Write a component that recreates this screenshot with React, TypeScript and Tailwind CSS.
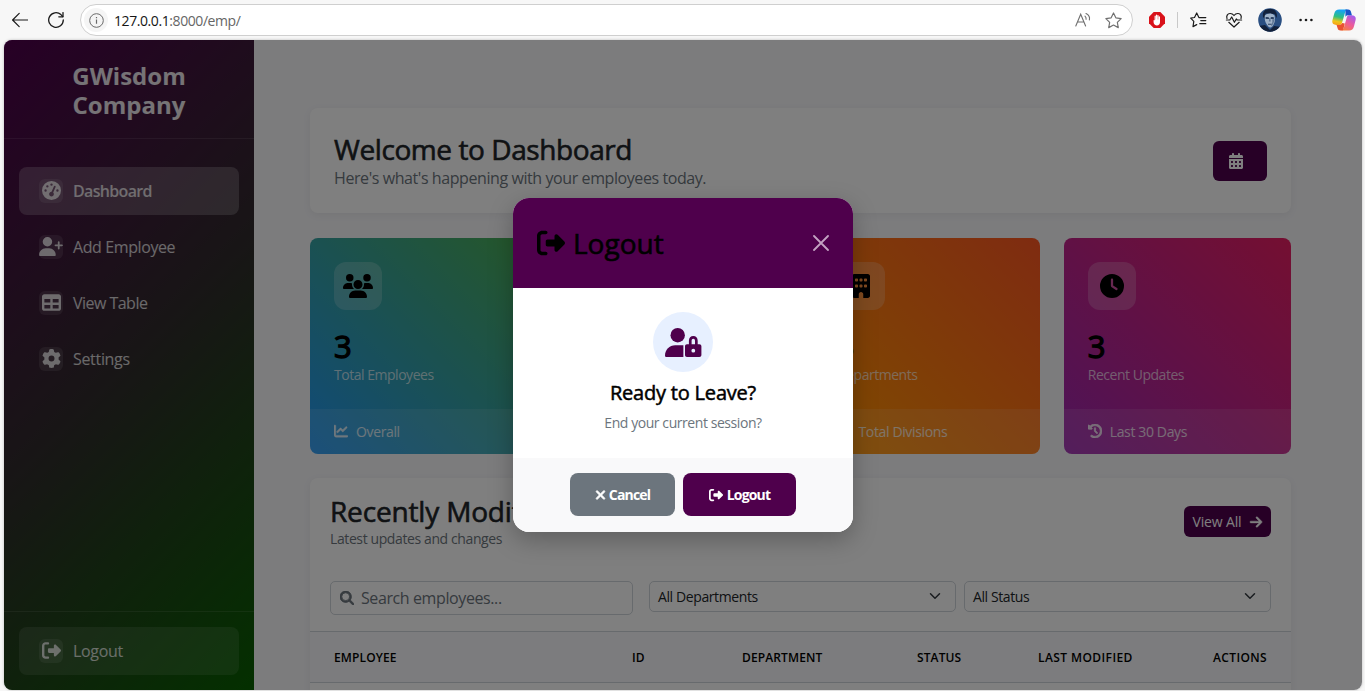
import type { ReactNode } from "react";
import {
  FaArrowRight,
  FaBuilding,
  FaCalendarDays,
  FaChartLine,
  FaClock,
  FaClockRotateLeft,
  FaGaugeHigh,
  FaGear,
  FaLayerGroup,
  FaMagnifyingGlass,
  FaRightFromBracket,
  FaTable,
  FaUserCheck,
  FaUserPlus,
  FaUsers,
  FaXmark,
} from "react-icons/fa6";

function BrowserBar() {
  return (
    <header className="flex h-10 shrink-0 items-center bg-[#f7f7f7] text-[#1b1b1b]">
      <svg className="ml-3 h-4 w-4 shrink-0" viewBox="0 0 16 16" fill="none" stroke="currentColor" strokeWidth="1.2" strokeLinecap="round" strokeLinejoin="round">
        <path d="M15.5 8H.8M7.2 1.4.6 8l6.600 6.600" />
      </svg>
      <svg className="ml-5 h-4 w-4 shrink-0" viewBox="0 0 16 16" fill="none" stroke="currentColor" strokeWidth="1.3" strokeLinecap="round" strokeLinejoin="round">
        <path d="M15.300 8A7.300 7.300 0 1 1 12.900 2.600L14.800 4.600" />
        <path d="M15 .6v4.200h-4.200" />
      </svg>
      <div className="ml-4 flex h-8 w-[1053px] shrink-0 items-center rounded-full border border-[#cfcfcf] bg-white pl-[3px]">
        <span className="flex h-6 w-6 items-center justify-center rounded-full bg-[#f5f5f5]">
          <svg className="h-[15px] w-[15px]" viewBox="0 0 15 15" fill="none" stroke="#6a6a6a" strokeWidth="1">
            <circle cx="7.500" cy="7.500" r="6.800" />
            <path d="M7.500 6.600v4.200M7.500 4v1.200" strokeWidth="1.200" />
          </svg>
        </span>
        <span className="ml-1.5 text-[14px] tracking-[-0.03em] text-[#666]">
          <span className="text-[#161616]">127.0.0.1</span>:8000/emp/
        </span>
        <svg className="ml-auto h-4 w-4" viewBox="0 0 16 16" fill="none" stroke="#707070" strokeWidth="1.100" strokeLinecap="round">
          <path d="M.8 14 5.700 2.200 10.600 14M2.600 10h6.200" />
          <path d="M10 4.200c.9.9 1.300 1.900 1.100 3.100M11 1.600c3 1.500 4 3.700 3.400 6.300" />
        </svg>
        <svg className="mr-2.5 ml-3.5 h-[17px] w-[17px]" viewBox="0 0 16 16" fill="none" stroke="#707070" strokeWidth="1.100" strokeLinejoin="round">
          <path d="m8 .9 2.200 4.600 5 .7-3.600 3.500.9 5L8 12.300l-4.500 2.400.9-5L.8 6.200l5-.7z" />
        </svg>
      </div>
      <svg className="ml-4 h-4 w-4 shrink-0" viewBox="0 0 16 16">
        <path d="M4.700 0h6.600L16 4.700v6.600L11.300 16H4.700L0 11.300V4.700z" fill="#d9121a" />
        <path d="M4.500 8.500c.1-.7 1-.7 1.100 0V4.200c0-.9 1.200-.9 1.200 0v3.200h.2V3.200c0-.9 1.200-.9 1.200 0v4.200h.2V3.700c0-.9 1.200-.9 1.200 0v3.900h.2V5c0-.9 1.200-.9 1.200 0v5.200c0 1.900-1.200 3.200-3.100 3.200-1.700 0-2.700-.8-3.200-2.300z" fill="#fff" />
      </svg>
      <span className="ml-3 h-4 w-px shrink-0 bg-[#c9c9c9]" />
      <svg className="ml-3 h-4 w-[17px] shrink-0" viewBox="0 0 17 16" fill="none" stroke="currentColor" strokeWidth="1.200" strokeLinejoin="round" strokeLinecap="round">
        <path d="M15.800 5.600H8.900L6.700 1 4.500 5.500.7 6.100l3.100 3.300-.8 5.200 3.700-2M10.800 8.600h5M9.800 11.700h6" />
      </svg>
      <svg className="ml-[18px] h-4 w-[18px] shrink-0" viewBox="0 0 17 16" fill="none" stroke="currentColor" strokeWidth="1.200" strokeLinejoin="round" strokeLinecap="round">
        <path d="M1.500 6.500C.6 4 2 1.600 4.500 1.500 6.200 1.400 7.600 2.300 8.500 3.500c.9-1.200 2.300-2.100 4-2C15 1.600 16.400 4 15.500 6.500" />
        <path d="M.9 8h3.400l1.900-3 2.700 5.300 1.900-3.300.9 1h4.400M3.300 10.300l5.200 4.700 5.200-4.700" />
      </svg>
      <svg className="ml-[15px] h-6 w-6 shrink-0" viewBox="0 0 24 24">
        <defs>
          <clipPath id="avatar"><circle cx="12" cy="12" r="11.800" /></clipPath>
        </defs>
        <g clipPath="url(#avatar)">
          <path fill="#2a4f82" d="M0 0h24v24H0z" />
          <path fill="#12213b" d="M5 9C4 3 8 .5 12.500 1c5 0 7.500 4 6 9l-2-4-9-.5-1 5zM0 18l7-1 5 5 4-4 8 1v5H0z" />
          <path fill="#9fb2c8" d="M6.800 7.500c2-2.500 7.500-3 9.800 0 .7 4.500.2 7.500-1.600 10-1.500 2.500-4 2.500-5.500 0-2-2.500-3.200-5.500-2.700-10z" />
          <path fill="#2c4162" d="M7.400 9.400c1.300-.7 2.500-.6 3.600 0v1.500c-1.300.3-2.500.2-3.400-.2zM12.600 9.400c1.300-.7 2.500-.6 3.600 0l-.3 1.400c-1 .4-2.200.4-3.300.1zM10 15.800h3.800v.9H10z" />
          <path fill="#5f7796" d="M14 11.500c1 2-.2 5-1.400 7.200 2-.6 3.400-3.600 3.900-7.700zM11.300 10h1l.5 3.600h-2z" />
        </g>
      </svg>
      <svg className="ml-4 h-4 w-4 shrink-0" viewBox="0 0 16 16" fill="currentColor">
        <circle cx="2.600" cy="8" r="1.300" /><circle cx="8" cy="8" r="1.300" /><circle cx="13.400" cy="8" r="1.300" />
      </svg>
      <svg className="ml-[18px] h-[22px] w-6 shrink-0" viewBox="0 0 24 22">
        <defs>
          <linearGradient id="cpa" x1="0.3" y1="0" x2="0.1" y2="1">
            <stop offset="0" stopColor="#15a4f4" /><stop offset="0.450" stopColor="#2fc07f" /><stop offset="0.750" stopColor="#f0c419" /><stop offset="1" stopColor="#f59a1b" />
          </linearGradient>
          <linearGradient id="cpb" x1="0.8" y1="0" x2="0.2" y2="1">
            <stop offset="0" stopColor="#a25cf0" /><stop offset="0.500" stopColor="#ec5b9c" /><stop offset="1" stopColor="#f7803c" />
          </linearGradient>
        </defs>
        <path d="M16.800 6.300h2.700c3.300 0 4.800 1.900 4.100 4.700l-1.600 6.200c-.8 3-2.200 4.300-4.900 4.300H8.700c2 0 2.700-1.200 3.300-3.200l2.600-9.300c.4-1.500 1-2.700 2.200-2.700z" fill="url(#cpb)" />
        <path d="M7.200.5h9c-1.800 0-2.600 1.200-3.200 3.200l-2.800 9.500c-.4 1.500-1 2.700-2.700 2.700H4.300C1 15.900-.3 14 .5 11l1.700-6.200C3 1.800 4.500.5 7.200.5z" fill="url(#cpa)" />
        <path d="M13.500.5h2.700c1.500 0 2.300.8 2.700 2.100l1 3.700h-4.200c-1 0-1.900.7-2.300 1.900z" fill="#1856c9" />
        <path d="M10.500 21.500H8.400c-1.500 0-2.400-.8-2.800-2.200l-1-3.400h3.200c1.200 0 2-.8 2.400-1.900l2.600.5-1.200 4.700c-.2 1-.6 1.900-1.100 2.300z" fill="#e9522f" />
      </svg>
    </header>
  );
}

type NavItemProps = { icon: ReactNode; label: string; tone?: string };

function NavItem({ icon, label, tone = "" }: NavItemProps) {
  return (
    <a className={`flex h-12 items-center rounded-lg px-5 text-[16px] text-white/80 ${tone}`}>
      <span className="mr-2.5 flex h-6 w-6 items-center justify-center rounded-md bg-white/10 pb-[2px] text-white/80">{icon}</span>
      {label}
    </a>
  );
}

function Sidebar() {
  return (
    <aside className="flex w-[250px] shrink-0 flex-col bg-[linear-gradient(135deg,#4f004c_0%,#302c2c_50%,#086000_100%)]">
      <div className="flex h-[99px] items-center justify-center border-b border-white/10 pt-px text-center text-[24px] leading-[29px] font-bold text-white/90">
        <span>GWisdom<br />Company</span>
      </div>
      <nav className="flex flex-col gap-2 px-[15px] pt-7">
        <NavItem icon={<FaGaugeHigh className="h-[19px] w-[19px]" />} label="Dashboard" tone="bg-white/20 font-semibold tracking-[-0.042em]" />
        <NavItem icon={<FaUserPlus className="h-[19px] w-6" />} label="Add Employee" tone="tracking-[-0.025em]" />
        <NavItem icon={<FaTable className="h-[19px] w-[19px]" />} label="View Table" tone="tracking-[-0.033em]" />
        <NavItem icon={<FaGear className="h-[19px] w-[19px]" />} label="Settings" tone="tracking-[-0.02em]" />
      </nav>
      <div className="mt-auto h-[79px] border-t border-white/10 px-[15px] pt-[15px]">
        <NavItem icon={<FaRightFromBracket className="h-[19px] w-[19px]" />} label="Logout" tone="bg-white/10 tracking-[-0.02em]" />
      </div>
    </aside>
  );
}

type StatProps = { icon: ReactNode; value: string; label: string; footIcon: ReactNode; foot: string; tone: string };

function StatCard({ icon, value, label, footIcon, foot, tone }: StatProps) {
  return (
    <section className={`flex h-[216px] flex-1 flex-col overflow-hidden rounded-lg ${tone}`}>
      <div className="flex-1 px-6 pt-6">
        <div className="flex h-12 w-12 items-center justify-center rounded-xl bg-white/20 text-black">{icon}</div>
        <div className="mt-[18px] text-[31px] leading-9 font-normal text-black [-webkit-text-stroke:1.3px_black]">{value}</div>
        <div className="text-[14px] leading-[21px] tracking-[-0.034em] text-white/70">{label}</div>
      </div>
      <div className="flex h-[45px] items-center bg-white/10 px-6 text-[14px] tracking-[-0.026em] text-white/80">
        <span className="mr-2 pb-0.5">{footIcon}</span>
        {foot}
      </div>
    </section>
  );
}

function SelectBox({ label }: { label: string }) {
  return (
    <div className="flex h-[31px] w-[307px] items-center justify-between rounded-[5px] border border-[#ced4da] pr-3.5 pl-2 text-[14px] tracking-[-0.028em] text-[#212529]">
      {label}
      <svg className="mb-0.5 h-3 w-3" viewBox="0 0 16 16" fill="none" stroke="#343a40" strokeWidth="2" strokeLinecap="round" strokeLinejoin="round">
        <path d="m2 5 6 6 6-6" />
      </svg>
    </div>
  );
}

function RecentTable() {
  return (
    <section className="mt-6 h-[240px] overflow-hidden rounded-t-lg bg-white shadow-[0_2px_8px_rgba(0,0,0,0.06)]">
      <div className="flex items-start justify-between px-5 pt-4">
        <div>
          <h2 className="text-[28px] leading-[34px] tracking-[-0.006em] text-[#212529] [-webkit-text-stroke:0.6px_#212529]">Recently Modified</h2>
          <p className="mt-px text-[14px] leading-5 tracking-[-0.028em] text-[#6c757d]">Latest updates and changes</p>
        </div>
        <button className="mt-3 flex h-[31px] w-[87px] items-center justify-center gap-[7px] rounded-md bg-[#4f004c] text-[14px] tracking-[-0.01em] text-white">
          View All
          <FaArrowRight className="h-3.5 w-3.5 stroke-[16]" />
        </button>
      </div>
      <div className="mt-8 flex items-start px-5">
        <div className="mr-4 flex h-[34px] w-[303px] items-center rounded-[5px] border border-[#ced4da] pl-[9px] text-[16px] tracking-[-0.025em] text-[#6c757d]">
          <FaMagnifyingGlass className="mr-[7px] h-3.5 w-3.5 stroke-[32]" />
          Search employees...
        </div>
        <SelectBox label="All Departments" />
        <span className="w-2" />
        <SelectBox label="All Status" />
      </div>
      <div className="mt-4 flex h-[52px] items-center border-y border-[#ced4da] bg-[#f8f9fc] pt-0.5 pl-6 text-[12px] font-semibold tracking-[0.01em] text-black">
        <span className="w-[298px]">EMPLOYEE</span>
        <span className="w-[110px]">ID</span>
        <span className="w-[175px]">DEPARTMENT</span>
        <span className="w-[121px]">STATUS</span>
        <span className="w-[175px] tracking-[0.034em]">LAST MODIFIED</span>
        <span className="tracking-[0.03em]">ACTIONS</span>
      </div>
    </section>
  );
}

function Dashboard() {
  return (
    <main className="flex-1 bg-[#f8f8fb] pt-[68px] pr-[71px] pl-14">
      <section className="flex h-[105px] items-center justify-between rounded-lg bg-white px-6 shadow-[0_2px_8px_rgba(0,0,0,0.06)]">
        <div>
          <h1 className="text-[28px] leading-[34px] tracking-[-0.015em] text-[#212529] [-webkit-text-stroke:0.6px_#212529]">Welcome to Dashboard</h1>
          <p className="text-[16px] leading-6 tracking-[-0.026em] text-[#6c757d]">Here's what's happening with your employees today.</p>
        </div>
        <button className="flex h-10 w-[54px] items-center justify-center rounded-md bg-[#4f004c] pr-2 text-white">
          <FaCalendarDays className="h-4 w-4" />
        </button>
      </section>
      <div className="mt-[25px] flex gap-6">
        <StatCard
          icon={<FaUsers className="h-6 w-[30px]" />} value="3" label="Total Employees"
          footIcon={<FaChartLine className="h-3.5 w-3.5 stroke-[16]" />} foot="Overall"
          tone="bg-[linear-gradient(45deg,#2196f3,#4caf50)]"
        />
        <StatCard
          icon={<FaUserCheck className="h-6 w-[30px]" />} value="3" label="Active Employees"
          footIcon={<FaChartLine className="h-3.5 w-3.5" />} foot="Current"
          tone="bg-[linear-gradient(45deg,#4caf50,#8bc34a)]"
        />
        <StatCard
          icon={<FaBuilding className="h-6 w-6" />} value="3" label="Departments"
          footIcon={<FaLayerGroup className="h-3.5 w-3.5" />} foot="Total Divisions"
          tone="bg-[linear-gradient(45deg,#ff9800,#ff5722)]"
        />
        <StatCard
          icon={<FaClock className="h-6 w-6" />} value="3" label="Recent Updates"
          footIcon={<FaClockRotateLeft className="h-3.5 w-3.5 stroke-[24]" />} foot="Last 30 Days"
          tone="bg-[linear-gradient(45deg,#9c27b0,#e91e63)]"
        />
      </div>
      <RecentTable />
    </main>
  );
}

function UserLockIcon() {
  return (
    <svg className="mt-px h-[29px] w-[37px]" viewBox="0 0 37 29" fill="currentColor">
      <circle cx="12.700" cy="7.200" r="7.200" />
      <path d="M10.200 17.200h8.200V29H1.600C.6 29 0 28.400 0 27.400c0-5.700 4.500-10.200 10.200-10.200z" />
      <path fillRule="evenodd" d="M23.900 16.300v-3.600c0-2.600 1.800-4.700 4.400-4.700s4.400 2.100 4.400 4.700v3.600h1.700c1.200 0 2 .8 2 2V27c0 1.200-.8 2-2 2H22c-1.200 0-2-.8-2-2v-8.700c0-1.200.8-2 2-2zm2.700 0H30v-3.600c0-1.100-.6-1.900-1.700-1.900s-1.700.8-1.700 1.900zm1.700 4.500a1.900 1.900 0 1 0 0 3.800 1.900 1.900 0 0 0 0-3.800z" />
    </svg>
  );
}

function LogoutModal() {
  return (
    <div className="absolute inset-0 bg-black/50">
      <div className="mt-[158px] ml-[509px] flex h-[334px] w-[340px] flex-col overflow-hidden rounded-2xl bg-white shadow-[0_8px_24px_rgba(0,0,0,0.25)]">
        <div className="flex h-[90px] items-center justify-between bg-[#4f004c] px-6">
          <div className="flex items-center gap-2 text-[28px] text-black [-webkit-text-stroke:0.6px_black]">
            <FaRightFromBracket className="h-7 w-7" />
            Logout
          </div>
          <svg className="h-4 w-4" viewBox="0 0 16 16" fill="none" stroke="#c3a2c2" strokeWidth="1.800" strokeLinecap="round">
            <path d="m1 1 14 14M15 1 1 15" />
          </svg>
        </div>
        <div className="flex flex-1 flex-col items-center pt-6">
          <div className="flex h-[60px] w-[60px] items-center justify-center rounded-full bg-[#e7f0ff] text-[#4f004c]">
            <UserLockIcon />
          </div>
          <div className="mt-[9px] text-[20px] leading-6 tracking-[-0.01em] text-black [-webkit-text-stroke:0.5px_black]">Ready to Leave?</div>
          <div className="mt-2 text-[14px] leading-5 tracking-[-0.031em] text-[#6c757d]">End your current session?</div>
        </div>
        <div className="flex h-[74px] items-start justify-center gap-2 bg-[#f9f9fa] pt-[15px] text-[14px] font-bold tracking-[-0.06em] text-white">
          <button className="flex h-[43px] w-[105px] items-center justify-center gap-[3px] rounded-lg bg-[#6c757d]">
            <FaXmark className="h-3.5 w-[11px] stroke-[24]" />
            Cancel
          </button>
          <button className="flex h-[43px] w-[113px] items-center justify-center gap-1 rounded-lg bg-[#4f004c]">
            <FaRightFromBracket className="h-3.5 w-3.5" />
            Logout
          </button>
        </div>
      </div>
    </div>
  );
}

export default function App() {
  return (
    <div className="flex h-[691px] w-[1365px] flex-col overflow-hidden bg-[#f7f7f7] font-['Open_Sans','Noto_Sans',sans-serif] whitespace-nowrap">
      <BrowserBar />
      <div className="relative ml-1 flex h-[650px] w-[1358px] overflow-hidden rounded-lg shadow-[0_0_3px_rgba(0,0,0,0.25)]">
        <Sidebar />
        <Dashboard />
        <LogoutModal />
      </div>
    </div>
  );
}
